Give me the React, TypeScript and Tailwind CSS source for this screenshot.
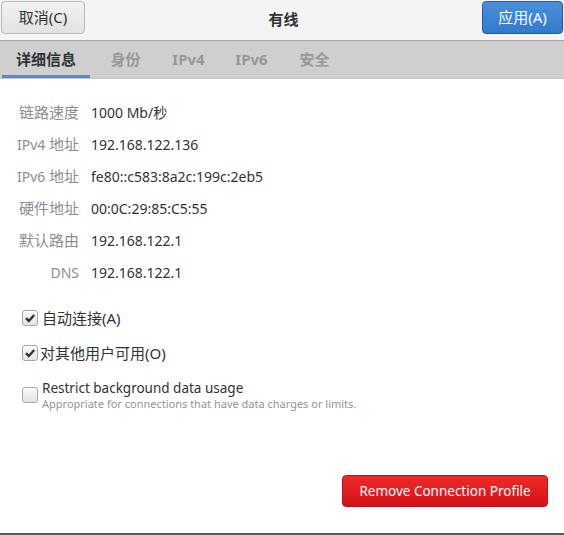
import React from "react";

const font = {
  fontFamily: '"Noto Sans", "Noto Sans CJK SC", sans-serif',
};

// label: [latin prefix, cjk part], value
const rows: [string, string, string][] = [
  ["", "链路速度", "1000 Mb/秒"],
  ["IPv4 ", "地址", "192.168.122.136"],
  ["IPv6 ", "地址", "fe80::c583:8a2c:199c:2eb5"],
  ["", "硬件地址", "00:0C:29:85:C5:55"],
  ["", "默认路由", "192.168.122.1"],
  ["DNS", "", "192.168.122.1"],
];

const tabs = ["身份", "IPv4", "IPv6", "安全"];

function Check({ checked }: { checked: boolean }) {
  return (
    <span className="flex h-[16px] w-[16px] shrink-0 items-center justify-center rounded-[3px] border border-[#a8a8a8] bg-gradient-to-b from-[#fafafa] to-[#e4e4e4]">
      {checked && (
        <svg width="12" height="12" viewBox="0 0 12 12">
          <path d="M2 6.2 L4.8 9 L10.2 3" fill="none" stroke="#2e3436" strokeWidth="2.4" />
        </svg>
      )}
    </span>
  );
}

export default function App() {
  return (
    <div className="flex h-[535px] w-[564px] flex-col bg-white text-[#2e3436]" style={font}>
      {/* title bar */}
      <div className="flex h-[41px] items-start justify-between border-b border-[#a4a4a4] bg-[#f4f4f4] px-[1px] pt-[1px]">
        <button className="flex h-[33px] w-[84px] items-center justify-center rounded-[4px] border border-[#b9b9b9] bg-gradient-to-b from-[#f2f2f2] to-[#e2e2e2] text-[15px] text-[#2e3436]">
          取消(C)
        </button>
        <div className="pt-[7px] text-[15px] font-bold">有线</div>
        <button className="flex h-[33px] w-[81px] items-center justify-center rounded-[4px] border border-[#1f5ba6] bg-gradient-to-b from-[#4a90d9] to-[#3479cc] text-[15px] text-white">
          应用(A)
        </button>
      </div>

      {/* notebook tabs */}
      <div className="flex h-[38px] items-stretch border-b border-[#c4c4c4] bg-[#cfcfcf] pl-[2px]">
        <div className="flex w-[88px] items-center justify-center border-b-[3px] border-[#4a90d9] pt-[3px] text-[15px] font-bold text-[#2e3436]">
          详细信息
        </div>
        <div className="ml-[4px] flex">
          {tabs.map((t) => (
            <div
              key={t}
              className="flex w-[63px] items-center justify-center text-[15px] font-bold text-[#979797]"
            >
              {t}
            </div>
          ))}
        </div>
      </div>

      {/* details */}
      <div className="mt-[17px] flex flex-col">
        {rows.map(([pre, cjk, v]) => (
          <div key={pre + cjk} className="flex h-[32px] items-center">
            <div className="w-[79px] text-right text-[#8b8e8f]">
              {pre && <span className="text-[14px]">{pre}</span>}
              {cjk && <span className="text-[15px]">{cjk}</span>}
            </div>
            <div className="pl-[12px] text-[14px] text-[#2e3436]">{v}</div>
          </div>
        ))}
      </div>

      {/* options */}
      <div className="mt-[20px] flex flex-col pl-[22px]">
        <label className="flex h-[20px] items-center gap-[4px] text-[15px]">
          <Check checked />
          <span>自动连接(A)</span>
        </label>
        <label className="mt-[15px] flex h-[20px] items-center gap-[2px] text-[15px]">
          <Check checked />
          <span>对其他用户可用(O)</span>
        </label>
        <div className="mt-[16px] flex items-center gap-[4px]">
          <Check checked={false} />
          <div className="flex flex-col">
            <span className="text-[13.5px] leading-[18px]">Restrict background data usage</span>
            <span className="text-[11px] leading-[14px] text-[#929595]">
              Appropriate for connections that have data charges or limits.
            </span>
          </div>
        </div>
      </div>

      {/* footer */}
      <div className="flex flex-1 items-end justify-end pb-[26px] pr-[16px]">
        <button className="flex h-[32px] w-[206px] items-center justify-center rounded-[4px] border border-[#b2161d] bg-gradient-to-b from-[#ef2929] to-[#d51016] text-[13.5px] text-white">
          Remove Connection Profile
        </button>
      </div>
      <div className="h-[2px] bg-[#5a5a5a]" />
    </div>
  );
}
